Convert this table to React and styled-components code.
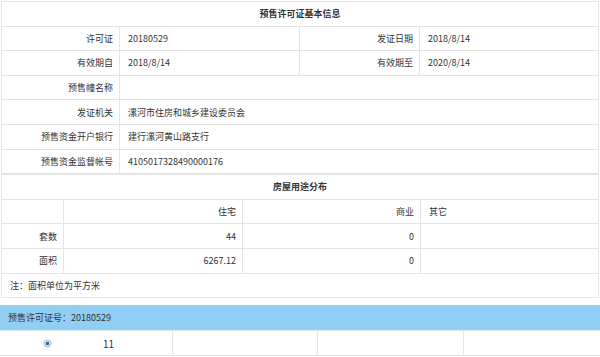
import React from 'react'
import styled, { createGlobalStyle } from 'styled-components'

const GlobalStyle = createGlobalStyle`
    html, body {
        margin:0;
        padding:0;
        background:#fff;
    }
    body {
        font-family:"Microsoft YaHei","Noto Sans CJK SC","Noto Sans",sans-serif;
        font-size:9px;
        color:#333;
    }
`

const Page = styled.div`
    width:600px;
    padding-top:1px;
`

const InfoTable = styled.table`
    width:598px;
    margin-left:1px;
    border-collapse:collapse;
    table-layout:fixed;
`

const Row = styled.tr`
    height:24.6px;
`

const Cell = styled.td`
    border:1px solid #e4e4e4;
    padding:0 ${p => (p.$align === 'right' ? '6px' : '8px')};
    text-align:${p => p.$align || 'left'};
    font-weight:${p => (p.$bold ? 'bold' : 'normal')};
    white-space:nowrap;
    line-height:1;
`

const Notice = styled.div`
    height:7px;
`

const Banner = styled.div`
    height:25px;
    background:#91cef4;
    display:flex;
    align-items:center;
    padding-left:8px;
    border-bottom:1px solid #d9ecf8;
`

const ListTable = styled.table`
    width:600px;
    border-collapse:collapse;
    table-layout:fixed;
`

const ListCell = styled.td`
    border-bottom:1px solid #e4e4e4;
    border-right:${p => (p.$last ? 'none' : '1px solid #e4e4e4')};
    height:24px;
    padding:0;
`

const NumberWrap = styled.div`
    display:flex;
    align-items:center;
    padding-left:44px;
    gap:52px;
    font-size:10px;
`

const Radio = styled.span`
    display:inline-block;
    width:7px;
    height:7px;
    border-radius:50%;
    background:radial-gradient(circle, #1f6fb5 0 1.6px, #d7dde3 2px, #9ea7af 100%);
    box-shadow:0 0 0 0.5px #b8c0c7;
`

const basic = [
    ['许可证', '20180529', '发证日期', '2018/8/14'],
    ['有效期自', '2018/8/14', '有效期至', '2020/8/14'],
]

const wide = [
    ['预售幢名称', ''],
    ['发证机关', '漯河市住房和城乡建设委员会'],
    ['预售资金开户银行', '建行漯河黄山路支行'],
    ['预售资金监督帐号', '4105017328490000176'],
]

const usage = [
    ['套数', '44', '0', ''],
    ['面积', '6267.12', '0', ''],
]

export default function App() {
    return (
        <Page>
            <GlobalStyle />
            <InfoTable>
                <colgroup>
                    <col style={{ width: '118px' }} />
                    <col style={{ width: '180px' }} />
                    <col style={{ width: '120px' }} />
                    <col />
                </colgroup>
                <tbody>
                    <Row>
                        <Cell colSpan={4} $align="center" $bold>预售许可证基本信息</Cell>
                    </Row>
                    {basic.map(r => (
                        <Row key={r[0]}>
                            <Cell $align="right">{r[0]}</Cell>
                            <Cell>{r[1]}</Cell>
                            <Cell $align="right">{r[2]}</Cell>
                            <Cell>{r[3]}</Cell>
                        </Row>
                    ))}
                    {wide.map(r => (
                        <Row key={r[0]}>
                            <Cell $align="right">{r[0]}</Cell>
                            <Cell colSpan={3}>{r[1]}</Cell>
                        </Row>
                    ))}
                </tbody>
            </InfoTable>
            <InfoTable>
                <colgroup>
                    <col style={{ width: '62px' }} />
                    <col style={{ width: '179px' }} />
                    <col style={{ width: '178px' }} />
                    <col />
                </colgroup>
                <tbody>
                    <Row>
                        <Cell colSpan={4} $align="center" $bold>房屋用途分布</Cell>
                    </Row>
                    <Row>
                        <Cell></Cell>
                        <Cell $align="right">住宅</Cell>
                        <Cell $align="right">商业</Cell>
                        <Cell>其它</Cell>
                    </Row>
                    {usage.map(r => (
                        <Row key={r[0]}>
                            <Cell $align="right">{r[0]}</Cell>
                            <Cell $align="right">{r[1]}</Cell>
                            <Cell $align="right">{r[2]}</Cell>
                            <Cell>{r[3]}</Cell>
                        </Row>
                    ))}
                    <Row>
                        <Cell colSpan={4}>注：面积单位为平方米</Cell>
                    </Row>
                </tbody>
            </InfoTable>
            <Notice />
            <Banner>预售许可证号：20180529</Banner>
            <ListTable>
                <colgroup>
                    <col style={{ width: '172px' }} />
                    <col style={{ width: '145px' }} />
                    <col style={{ width: '146px' }} />
                    <col />
                </colgroup>
                <tbody>
                    <tr>
                        <ListCell>
                            <NumberWrap>
                                <Radio />
                                <span>11</span>
                            </NumberWrap>
                        </ListCell>
                        <ListCell></ListCell>
                        <ListCell></ListCell>
                        <ListCell $last></ListCell>
                    </tr>
                </tbody>
            </ListTable>
        </Page>
    )
}
